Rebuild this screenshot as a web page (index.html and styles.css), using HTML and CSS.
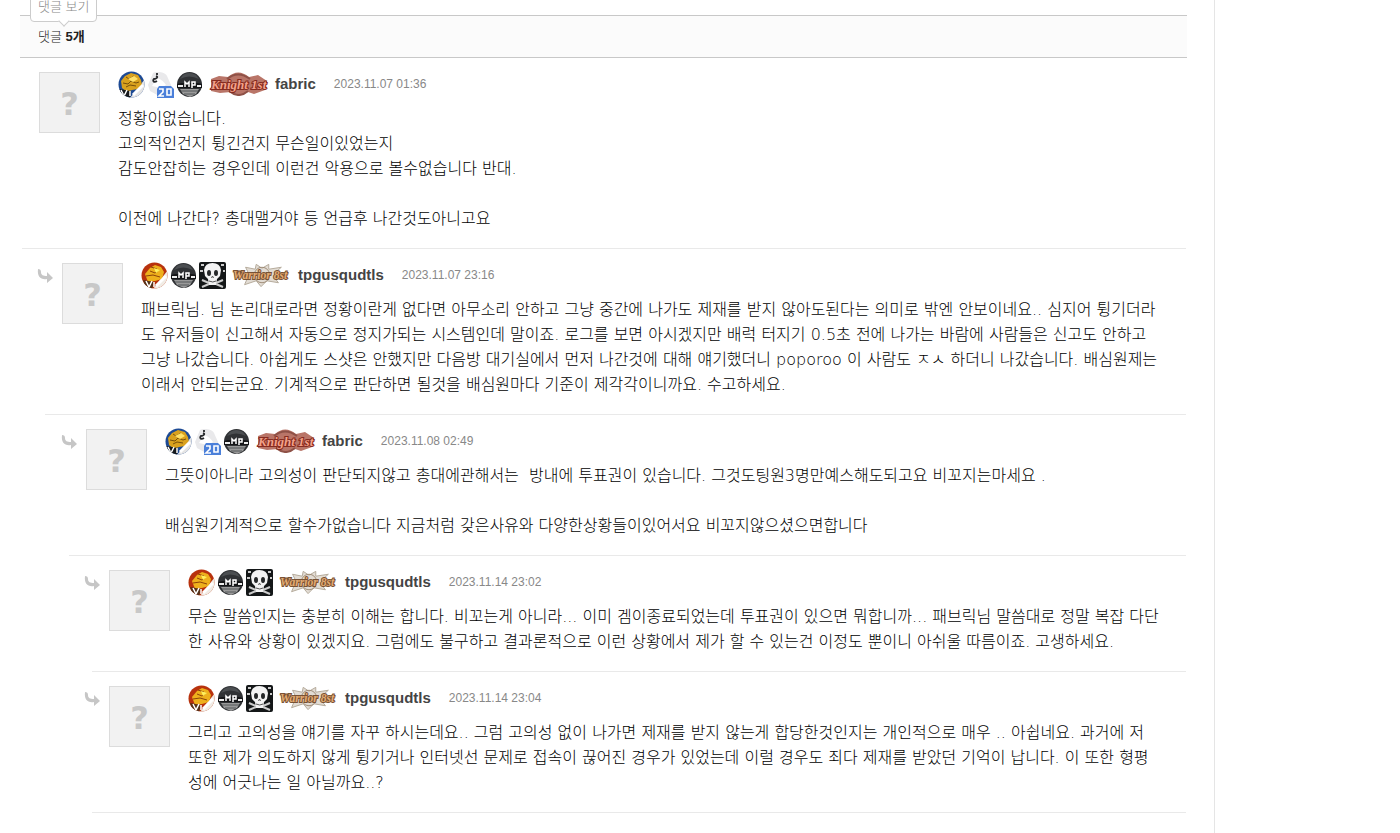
FILE: index.html
```html
<!DOCTYPE html>
<html lang="ko">
<head>
    <meta charset="UTF-8">
    <meta name="viewport" content="width=device-width, initial-scale=1.0">
    <title>댓글</title>
    <link rel="stylesheet" href="styles.css">
</head>
<body>

<!-- badge shapes, reused by every comment -->
<svg class="defs" aria-hidden="true">
    <defs>
        <clipPath id="ball"><circle cx="13.5" cy="13.5" r="13"/></clipPath>
        <symbol id="vip-blue" viewBox="0 0 27 27">
            <g clip-path="url(#ball)">
                <rect width="27" height="27" fill="#1d4a94"/>
                <path d="M12 27 27 8v19z" fill="#e4e4e4"/>
                <path d="M3 10l4-5 6-3 7 2 3 5 1 5-4 4-6 1-5 2-5-4z" fill="#d9a11e"/>
                <path d="M8 6l3 2 5-3M5 12l5 1 3-3 5 2 3-1M8 16l4-2 6 1" stroke="#76500c" fill="none"/>
                <path d="M10 8l6-3 4 3-5 3z" fill="#ffe168"/>
                <path d="M1 18l6 1 6 1-1 7H4z" fill="#16191c"/>
                <path d="M15 24l10-10" stroke="#fff" stroke-width="3"/>
                <path d="M3 19l3 6 3-6M12 20v5" stroke="#fff" stroke-width="1.5" fill="none"/>
            </g>
        </symbol>
        <symbol id="vip-red" viewBox="0 0 27 27">
            <g clip-path="url(#ball)">
                <rect width="27" height="27" fill="#b8320d"/>
                <path d="M12 27 27 8v19z" fill="#f1ece5"/>
                <path d="M4 12l5-6 5-3 6 2 3 5-2 7-7 2-7 1z" fill="#eeb01c"/>
                <path d="M9 9l5 2 4-3M5 14l7-1 7 2M10 5l6 2" stroke="#8c4309" fill="none"/>
                <path d="M13 6l6 2-4 3z" fill="#fff05d"/>
                <path d="M2 18l11 2-2 7H5z" fill="#53321a"/>
                <path d="M15 24l10-10" stroke="#fff" stroke-width="3"/>
                <path d="M5 19l3 6 3-6M13 20v5" stroke="#fff" stroke-width="1.5" fill="none"/>
            </g>
        </symbol>
        <symbol id="ghost" viewBox="0 0 27 27">
            <path d="M6 2c4-2 12-1 14 3l4 9-1 11H12L3 20 1 14z" fill="#e9e9eb"/>
            <path d="M10 7c4 1 7 4 9 7l-5 3-9-2z" fill="#fff"/>
            <path d="M10 2v2M9 5c3 1 0 3-2 3-2 2 0 4 3 2" stroke="#26282b" stroke-width="1.8" fill="none"/>
            <path d="M12 15h12l3 3v9H10v-9z" fill="#4b80da"/>
            <path d="M12 18h4v3l-4 4h5M20 18h4v6h-4z" stroke="#fff" stroke-width="1.6" fill="none"/>
        </symbol>
        <symbol id="mp" viewBox="0 0 27 27">
            <circle cx="13.5" cy="13.5" r="12.5" fill="#303235"/>
            <path d="M4 8Q13 3 23 8L20 4Q13 0 7 4z" fill="#4b4e51"/>
            <path d="M1 13l4-1h17l4 1v4H1z" fill="#151618"/>
            <path d="M4 18h19l-3 5-6 3-7-3z" fill="#999"/>
            <path d="M5 20h17M8 23h11" stroke="#55585b"/>
            <path d="M2 15h5M21 15h4" stroke="#eee" stroke-width="2"/>
            <path d="M9 16v-5l2 2 2-2v5M16 17v-6h3v3h-3" stroke="#fff" stroke-width="1.5" fill="none"/>
        </symbol>
        <symbol id="skull" viewBox="0 0 27 27">
            <rect width="27" height="27" rx="2" fill="#141718"/>
            <path d="M2 3h3M1 9h3M22 3h3M24 9h2M3 18l7 3M24 18l-7 3M3 25l7-3M24 25l-7-3" stroke="#ccc" stroke-width="2"/>
            <path d="M5 8Q6 1 13.5 1T22 8l-1 6-3 3-1 6h-7l-1-6-3-3z" fill="#f3f3f3"/>
            <ellipse cx="10" cy="11" rx="2" ry="3" fill="#252728"/>
            <ellipse cx="17" cy="11" rx="2" ry="3" fill="#252728"/>
            <path d="M12.500 16l1-2 1 2M10 19q4 2 7 0" stroke="#555" fill="none"/>
        </symbol>
        <symbol id="knight" viewBox="0 0 60 24">
            <path d="M2 7l8-3 9 1q10-9 21 0l9-2 9 6-2 9-11 4-6-2q-9 5-17 0l-11 1-9-2z" fill="#b97568"/>
            <path d="M18 7Q29-2 41 7M20 19q10 8 19 0" stroke="#8e5147" stroke-width="2" fill="none"/>
            <text class="rank-text" x="2" y="17" fill="#f3a28a" stroke="#862b20" stroke-width="2">Knight 1st</text>
        </symbol>
        <symbol id="warrior" viewBox="0 0 62 24">
            <path d="M14 4l10 2 1-5 6 4 7-4v5l13-2-7 6 14 2-14 3 4 5-12-2-6 6-5-6-12 4 3-7-13-3 14-2z" fill="#e2dcd4" stroke="#b3a999"/>
            <circle cx="31" cy="12" r="8" fill="none" stroke="#9f8c77"/>
            <text class="rank-text small" x="1" y="16" fill="#e3ab72" stroke="#795234" stroke-width="2">Warrior 8st</text>
        </symbol>
        <symbol id="arrow" viewBox="0 0 16 16">
            <path d="M1 1c2 0 3 1 3 3 0 3 2 4 6 4V4l6 6-6 5v-4C4 12 0 9 1 1z" fill="#c6c6c6"/>
        </symbol>
    </defs>
</svg>

<main class="page">
    <section class="feedback">
        <header class="fb-header">
            <span class="tip">댓글 보기</span>
            <h2>댓글 <strong>5개</strong></h2>
        </header>

        <article class="comment">
            <div class="avatar">?</div>
            <div class="content">
                <div class="meta">
                    <svg class="badge"><use href="#vip-blue"/></svg>
                    <svg class="badge"><use href="#ghost"/></svg>
                    <svg class="badge"><use href="#mp"/></svg>
                    <svg class="rank"><use href="#knight"/></svg>
                    <a class="name" href="#">fabric</a>
                    <span class="date">2023.11.07 01:36</span>
                </div>
                <p>정황이없습니다.<br>
                고의적인건지 튕긴건지 무슨일이있었는지<br>
                감도안잡히는 경우인데 이런건 악용으로 볼수없습니다 반대.<br>
                <br>
                이전에 나간다? 총대맬거야 등 언급후 나간것도아니고요</p>
            </div>
        </article>

        <article class="comment depth1">
            <svg class="arrow"><use href="#arrow"/></svg>
            <div class="avatar">?</div>
            <div class="content">
                <div class="meta">
                    <svg class="badge"><use href="#vip-red"/></svg>
                    <svg class="badge"><use href="#mp"/></svg>
                    <svg class="badge"><use href="#skull"/></svg>
                    <svg class="rank"><use href="#warrior"/></svg>
                    <a class="name" href="#">tpgusqudtls</a>
                    <span class="date">2023.11.07 23:16</span>
                </div>
                <p>패브릭님. 님 논리대로라면 정황이란게 없다면 아무소리 안하고 그냥 중간에 나가도 제재를 받지 않아도된다는 의미로 밖엔 안보이네요.. 심지어 튕기더라<br>
                도 유저들이 신고해서 자동으로 정지가되는 시스템인데 말이죠. 로그를 보면 아시겠지만 배럭 터지기 0.5초 전에 나가는 바람에 사람들은 신고도 안하고<br>
                그냥 나갔습니다. 아쉽게도 스샷은 안했지만 다음방 대기실에서 먼저 나간것에 대해 얘기했더니 poporoo 이 사람도 ㅈㅅ 하더니 나갔습니다. 배심원제는<br>
                이래서 안되는군요. 기계적으로 판단하면 될것을 배심원마다 기준이 제각각이니까요. 수고하세요.</p>
            </div>
        </article>

        <article class="comment depth2">
            <svg class="arrow"><use href="#arrow"/></svg>
            <div class="avatar">?</div>
            <div class="content">
                <div class="meta">
                    <svg class="badge"><use href="#vip-blue"/></svg>
                    <svg class="badge"><use href="#ghost"/></svg>
                    <svg class="badge"><use href="#mp"/></svg>
                    <svg class="rank"><use href="#knight"/></svg>
                    <a class="name" href="#">fabric</a>
                    <span class="date">2023.11.08 02:49</span>
                </div>
                <p>그뜻이아니라 고의성이 판단되지않고 총대에관해서는 &nbsp;방내에 투표권이 있습니다. 그것도팅원3명만예스해도되고요 비꼬지는마세요 .<br>
                <br>
                배심원기계적으로 할수가없습니다 지금처럼 갖은사유와 다양한상황들이있어서요 비꼬지않으셨으면합니다</p>
            </div>
        </article>

        <article class="comment depth3">
            <svg class="arrow"><use href="#arrow"/></svg>
            <div class="avatar">?</div>
            <div class="content">
                <div class="meta">
                    <svg class="badge"><use href="#vip-red"/></svg>
                    <svg class="badge"><use href="#mp"/></svg>
                    <svg class="badge"><use href="#skull"/></svg>
                    <svg class="rank"><use href="#warrior"/></svg>
                    <a class="name" href="#">tpgusqudtls</a>
                    <span class="date">2023.11.14 23:02</span>
                </div>
                <p>무슨 말씀인지는 충분히 이해는 합니다. 비꼬는게 아니라... 이미 겜이종료되었는데 투표권이 있으면 뭐합니까... 패브릭님 말씀대로 정말 복잡 다단<br>
                한 사유와 상황이 있겠지요. 그럼에도 불구하고 결과론적으로 이런 상황에서 제가 할 수 있는건 이정도 뿐이니 아쉬울 따름이죠. 고생하세요.</p>
            </div>
        </article>

        <article class="comment depth3">
            <svg class="arrow"><use href="#arrow"/></svg>
            <div class="avatar">?</div>
            <div class="content">
                <div class="meta">
                    <svg class="badge"><use href="#vip-red"/></svg>
                    <svg class="badge"><use href="#mp"/></svg>
                    <svg class="badge"><use href="#skull"/></svg>
                    <svg class="rank"><use href="#warrior"/></svg>
                    <a class="name" href="#">tpgusqudtls</a>
                    <span class="date">2023.11.14 23:04</span>
                </div>
                <p>그리고 고의성을 얘기를 자꾸 하시는데요.. 그럼 고의성 없이 나가면 제재를 받지 않는게 합당한것인지는 개인적으로 매우 .. 아쉽네요. 과거에 저<br>
                또한 제가 의도하지 않게 튕기거나 인터넷선 문제로 접속이 끊어진 경우가 있었는데 이럴 경우도 죄다 제재를 받았던 기억이 납니다. 이 또한 형평<br>
                성에 어긋나는 일 아닐까요..?</p>
            </div>
        </article>
    </section>
</main>

</body>
</html>
```
FILE: styles.css
```css
* {
    box-sizing: border-box;
}

body {
    margin: 0;
    background: #fff;
    color: #000;
    font-family: "Liberation Sans", "Noto Sans CJK KR", sans-serif;
    font-weight: 300;
}

.defs {
    position: absolute;
    width: 0;
    height: 0;
}

.page {
    max-width: 1215px;
    min-height: 100vh;
    padding: 15px 27px 0 20px;
    border-right: 1px solid #e5e5e5;
}

/* header */
.fb-header {
    position: relative;
    padding: 10px 18px;
    background: #fbfbfb;
    border-top: 1px solid #c8c8c8;
    border-bottom: 1px solid #c8c8c8;
}

.fb-header h2 {
    margin: 0;
    font-size: 13px;
    line-height: 21px;
    font-weight: 300;
    color: #222;
}

.fb-header strong {
    font-weight: 700;
}

.tip {
    position: absolute;
    left: 10px;
    bottom: 35px;
    padding: 4px 7px;
    border: 1px solid #ccc;
    border-radius: 4px;
    background: #fff;
    color: #888;
    font-size: 13px;
    line-height: 20px;
    white-space: nowrap;
}

.tip::after {
    content: "";
    position: absolute;
    left: 29px;
    bottom: -4px;
    width: 7px;
    height: 7px;
    background: #fff;
    border: solid #ccc;
    border-width: 0 1px 1px 0;
    transform: rotate(45deg);
}

/* comments */
.comment {
    position: relative;
    display: flex;
    gap: 18px;
    margin: 0 1px 0 2px;
    padding: 14px 0 17px 17px;
    border-bottom: 1px solid #e9e9e9;
}

.depth1 {
    margin-left: 25px;
}

.depth2 {
    margin-left: 49px;
}

.depth3 {
    margin-left: 72px;
}

.arrow {
    position: absolute;
    top: 19px;
    left: -8px;
    width: 16px;
    height: 16px;
}

.avatar {
    flex: none;
    width: 61px;
    height: 61px;
    border: 1px solid #dcdcdc;
    background: #f2f2f2;
    color: #c8c8c8;
    font-family: "DejaVu Sans", sans-serif;
    font-size: 32px;
    font-weight: 700;
    line-height: 62px;
    text-align: center;
}

.content {
    flex: 1;
    min-width: 0;
}

.meta {
    display: flex;
    align-items: center;
    gap: 2px;
    height: 24px;
    margin-bottom: 10px;
}

.badge {
    width: 27px;
    height: 27px;
}

.rank {
    width: 60px;
    height: 24px;
    margin: 0 4px;
}

.rank-text {
    font-family: "Liberation Serif", serif;
    font-size: 13px;
    font-weight: bold;
    font-style: italic;
    paint-order: stroke;
}

.rank-text.small {
    font-size: 12px;
}

.name {
    color: #444;
    font-size: 15px;
    font-weight: bold;
    line-height: 24px;
    text-decoration: none;
}

.date {
    margin-left: 16px;
    color: #888;
    font-size: 12px;
    line-height: 24px;
}

.content p {
    margin: 0;
    font-family: "DejaVu Sans Light", "DejaVu Sans", "Noto Sans CJK KR", sans-serif;
    font-size: 16px;
    line-height: 25px;
}
```
